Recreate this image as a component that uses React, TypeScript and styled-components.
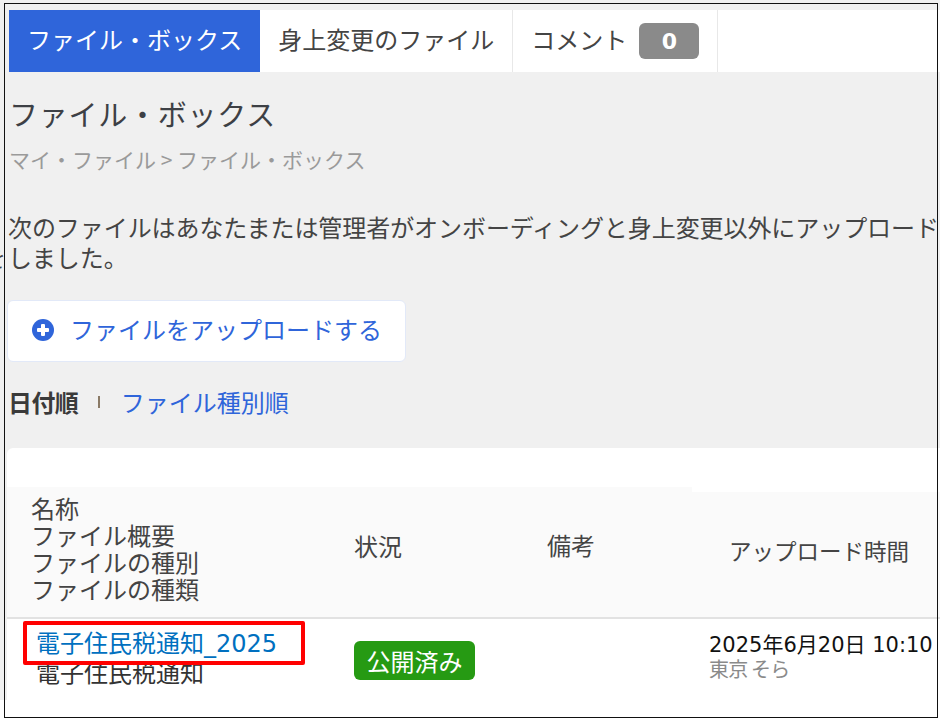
import React from 'react';
import styled, {createGlobalStyle} from 'styled-components';

const GlobalStyle = createGlobalStyle`
  html, body {
    margin: 0;
    padding: 0;
    background: #ffffff;
  }
  body {
    font-family: "Noto Sans CJK JP", "Liberation Sans", sans-serif;
    color: #444;
    overflow: hidden;
  }
`;

const Shot = styled.div`
  position: relative;
  width: 940px;
  height: 719px;
  overflow: hidden;
  background: #fff;
`;

// black line that was drawn around the capture
const Frame = styled.div`
  position: absolute;
  left: 4px;
  top: 3px;
  width: 934px;
  height: 715px;
  box-sizing: border-box;
  border: 1.5px solid #111;
  pointer-events: none;
`;

const Page = styled.div`
  width: 940px;
  height: 700px;
  background: #f0f0f0;
  padding-top: 10px;
  box-sizing: border-box;
`;

const TabBar = styled.nav`
  display: flex;
  height: 62px;
  margin-left: 9px;
  background: #fff;
`;

const Tab = styled.div<{$active?: boolean}>`
  display: flex;
  align-items: center;
  gap: 12px;
  box-sizing: border-box;
  padding: 0 18px 6px;
  font-size: 24px;
  color: ${p => (p.$active ? '#fff' : '#444')};
  background: ${p => (p.$active ? '#2f65da' : '#fff')};
  border-right: ${p => (p.$active ? 'none' : '1px solid #e8e8e8')};
`;

const Count = styled.span`
  display: inline-flex;
  align-items: center;
  justify-content: center;
  width: 60px;
  height: 36px;
  margin-top: 6px;
  border-radius: 6px;
  background: #8a8a8a;
  color: #fff;
  font-family: "DejaVu Sans", sans-serif;
  font-size: 22px;
  font-weight: 700;
`;

const Content = styled.div`
  padding-left: 9px;
`;

const Title = styled.h1`
  margin: 22px 0 0 0;
  font-size: 29px;
  line-height: 38px;
  font-weight: 400;
  letter-spacing: 0.75px;
  color: #3d4045;
`;

const Crumbs = styled.div`
  margin-top: 13px;
  font-size: 21px;
  line-height: 28px;
  color: #9a9a9a;
`;

const Notice = styled.p`
  margin: 39px 0 0 -1px;
  font-size: 24px;
  line-height: 30px;
  letter-spacing: -0.07px;
  color: #444;
  white-space: nowrap;
`;

const Clipped = styled.span`
  margin-left: -26px;
  margin-right: 2px;
`;

const UploadButton = styled.button`
  display: flex;
  align-items: center;
  gap: 15px;
  box-sizing: border-box;
  width: 399px;
  height: 62px;
  margin: 28px 0 0 -2px;
  padding: 0 0 6px 23px;
  background: #fff;
  border: 1px solid #e2e9f8;
  border-radius: 6px;
  font-family: inherit;
  font-size: 24px;
  color: #2f65da;
`;

const PlusIcon = styled.svg`
  width: 24px;
  height: 24px;
  flex: none;
  margin-top: 4px;
`;

const SortRow = styled.div`
  display: flex;
  align-items: center;
  height: 32px;
  margin-top: 23px;
  margin-left: -1px;
  font-size: 24px;
`;

const SortActive = styled.b`
  font-weight: 700;
  letter-spacing: -0.6px;
  color: #3a3a3a;
`;

const SortSep = styled.span`
  width: 1.5px;
  height: 12px;
  margin: 2px 21px 0 20px;
  background: #8a7a66;
`;

const SortLink = styled.a`
  color: #2f65da;
`;

const Card = styled.div`
  width: 933px;
  height: 252px;
  margin: 31px 0 0 -2px;
  background: #fff;
  border-radius: 6px 0 0 0;
  padding-top: 39px;
  box-sizing: border-box;
`;

const Table = styled.div`
  display: grid;
  grid-template-columns: 302px 192px 191px 1fr;
`;

const Head = styled.div<{$drop?: number; $pad: number; $lift: number; $small?: boolean}>`
  display: flex;
  align-items: center;
  box-sizing: border-box;
  height: ${p => 132 - (p.$drop || 0)}px;
  margin-top: ${p => p.$drop || 0}px;
  padding: 0 0 ${p => p.$lift}px ${p => p.$pad}px;
  background: #fafafa;
  border-bottom: 2px solid #e2e2e2;
  font-size: ${p => (p.$small ? '22.5px' : '24px')};
  line-height: 27px;
  color: #444;
`;

const Cell = styled.div<{$pad: number; $top: number}>`
  padding: ${p => p.$top}px 0 0 ${p => p.$pad}px;
`;

const NameLink = styled.a`
  display: block;
  height: 27px;
  font-family: "DejaVu Sans", "Noto Sans CJK JP", sans-serif;
  font-size: 24px;
  line-height: 31px;
  color: #0070c0;
`;

const NameSub = styled.div`
  font-size: 24px;
  line-height: 31px;
  color: #333;
`;

const Status = styled.span`
  display: inline-flex;
  align-items: center;
  justify-content: center;
  box-sizing: border-box;
  width: 121px;
  height: 39px;
  border-radius: 6px;
  background: #269a13;
  color: #fff;
  font-size: 24px;
`;

const Stamp = styled.div`
  height: 24px;
  font-family: "DejaVu Sans", "Noto Sans CJK JP", sans-serif;
  font-size: 21px;
  line-height: 26px;
  color: #111;
  white-space: nowrap;
`;

const Uploader = styled.div`
  font-size: 20px;
  line-height: 26px;
  letter-spacing: -0.8px;
  color: #8a8a8a;
`;

const Highlight = styled.div`
  position: absolute;
  left: 23px;
  top: 621px;
  width: 282px;
  height: 44px;
  box-sizing: border-box;
  border: 4px solid #f00;
  border-radius: 2px;
  pointer-events: none;
`;

export default function App() {
    return (
        <Shot>
            <GlobalStyle />
            <Page>
                <TabBar>
                    <Tab $active>ファイル・ボックス</Tab>
                    <Tab>身上変更のファイル</Tab>
                    <Tab>コメント<Count>0</Count></Tab>
                </TabBar>
                <Content>
                    <Title>ファイル・ボックス</Title>
                    <Crumbs>マイ・ファイル &gt; ファイル・ボックス</Crumbs>
                    <Notice>
                        次のファイルはあなたまたは管理者がオンボーディングと身上変更以外にアップロード<br />
                        <Clipped>を</Clipped>しました。
                    </Notice>
                    <UploadButton>
                        <PlusIcon viewBox="0 0 24 24">
                            <circle cx="12" cy="12" r="11" fill="#2f65da" />
                            <rect x="6" y="10" width="12" height="4" rx="1" fill="#fff" />
                            <rect x="10" y="6" width="4" height="12" rx="1" fill="#fff" />
                        </PlusIcon>
                        ファイルをアップロードする
                    </UploadButton>
                    <SortRow>
                        <SortActive>日付順</SortActive>
                        <SortSep />
                        <SortLink>ファイル種別順</SortLink>
                    </SortRow>
                    <Card>
                        <Table>
                            <Head $pad={24} $lift={8}>
                                <div>名称<br />ファイル概要<br />ファイルの種別<br />ファイルの種類</div>
                            </Head>
                            <Head $pad={45} $lift={14}>状況</Head>
                            <Head $pad={46} $lift={16}>備考</Head>
                            <Head $pad={37} $lift={8} $drop={5} $small>アップロード時間</Head>
                            <Cell $pad={29} $top={10}>
                                <NameLink>電子住民税通知_2025</NameLink>
                                <NameSub>電子住民税通知</NameSub>
                            </Cell>
                            <Cell $pad={45} $top={22}><Status>公開済み</Status></Cell>
                            <Cell $pad={0} $top={0} />
                            <Cell $pad={17} $top={13}>
                                <Stamp>2025年6月20日 10:10</Stamp>
                                <Uploader>東京 そら</Uploader>
                            </Cell>
                        </Table>
                    </Card>
                </Content>
            </Page>
            <Highlight />
            <Frame />
        </Shot>
    );
}
